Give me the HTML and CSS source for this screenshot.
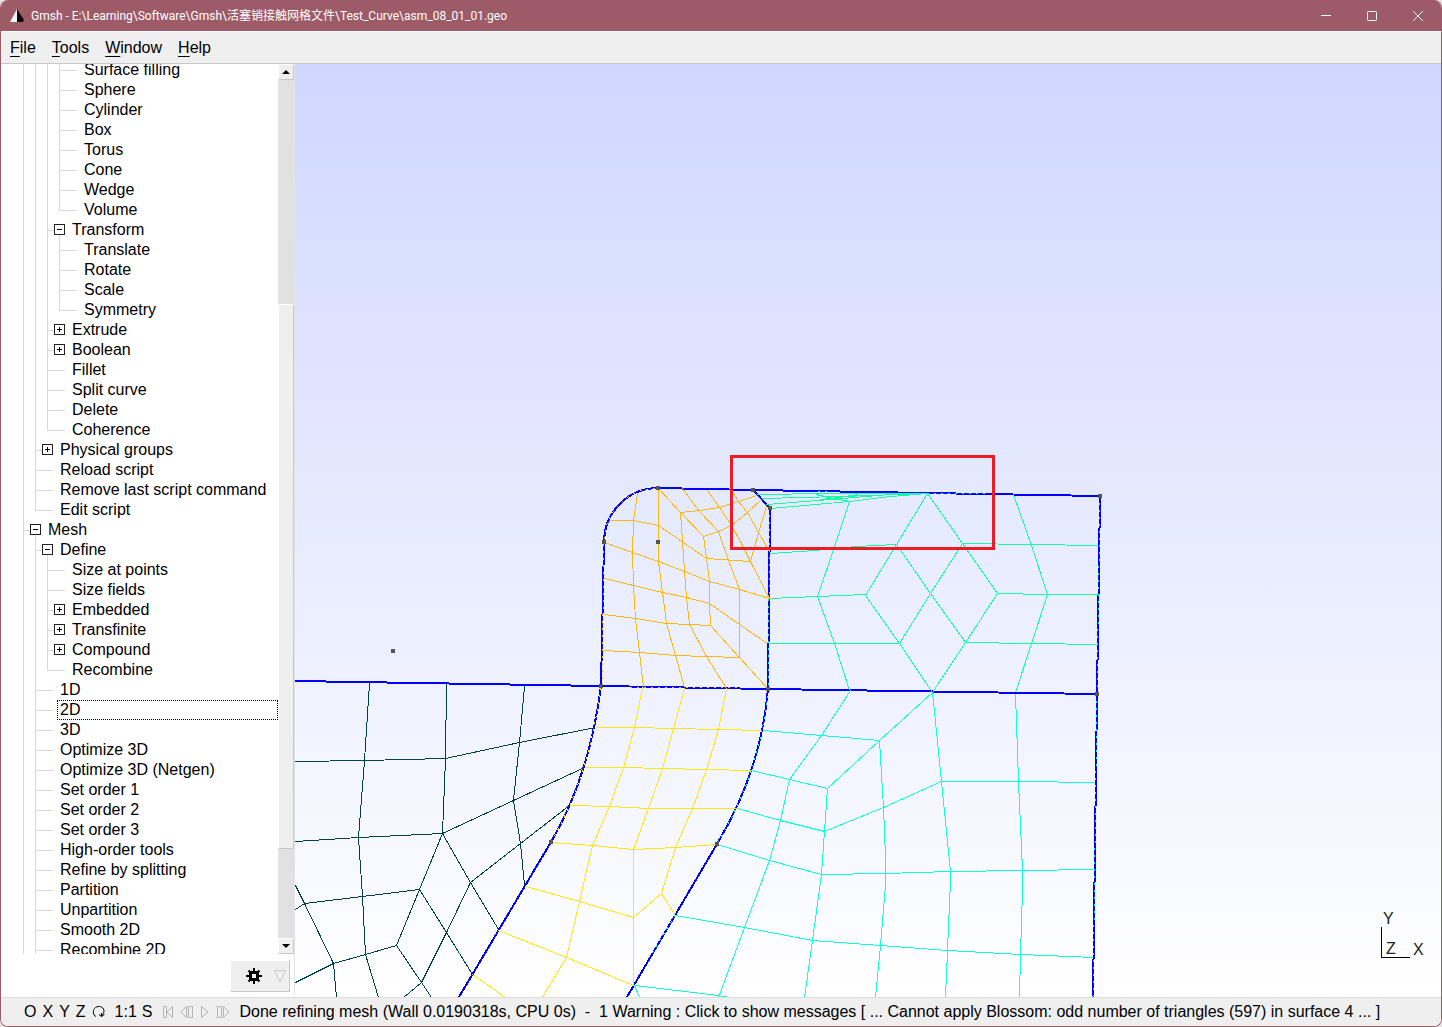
FILE: index.html
```html
<!DOCTYPE html>
<html lang="en">
<head>
<meta charset="utf-8">
<title>Gmsh</title>
<link rel="stylesheet" href="styles.css">
</head>
<body>
<div class="window">
  <header class="titlebar">
    <svg class="logo" width="16" height="16" viewBox="0 0 16 16" aria-hidden="true"><path d="M8 1L1 14H8Z" fill="#f4f4f4"/><path d="M8 1L15 12L14 14H8Z" fill="#0a0a0a"/></svg>
    <h1 class="title">Gmsh - E:\Learning\Software\Gmsh\活塞销接触网格文件\Test_Curve\asm_08_01_01.geo</h1>
    <div class="controls">
      <button class="control" aria-label="Minimize"><svg width="12" height="12" viewBox="0 0 12 12"><path d="M1 5.500H11" /></svg></button>
      <button class="control" aria-label="Maximize"><svg width="12" height="12" viewBox="0 0 12 12"><rect x="1.500" y="1.500" width="9" height="9" rx="1"/></svg></button>
      <button class="control" aria-label="Close"><svg width="12" height="12" viewBox="0 0 12 12"><path d="M1 1L11 11M11 1L1 11"/></svg></button>
    </div>
  </header>
  <nav class="menubar">
    <button class="menu"><u>F</u>ile</button>
    <button class="menu"><u>T</u>ools</button>
    <button class="menu"><u>W</u>indow</button>
    <button class="menu"><u>H</u>elp</button>
  </nav>
  <main class="main">
    <aside class="side">
      <div class="panel">
        <div class="viewport">
          <ul class="tree">
            <li><ul>
              <li><ul>
                <li><ul>
                  <li><div class="row">Surface filling</div></li>
                  <li><div class="row">Sphere</div></li>
                  <li><div class="row">Cylinder</div></li>
                  <li><div class="row">Box</div></li>
                  <li><div class="row">Torus</div></li>
                  <li><div class="row">Cone</div></li>
                  <li><div class="row">Wedge</div></li>
                  <li><div class="row">Volume</div></li>
                </ul></li>
                <li><div class="row open"><button class="box minus" aria-label="Collapse Transform"></button>Transform</div><ul>
                  <li><div class="row">Translate</div></li>
                  <li><div class="row">Rotate</div></li>
                  <li><div class="row">Scale</div></li>
                  <li><div class="row">Symmetry</div></li>
                </ul></li>
                <li><div class="row node"><button class="box plus" aria-label="Expand Extrude"></button>Extrude</div></li>
                <li><div class="row node"><button class="box plus" aria-label="Expand Boolean"></button>Boolean</div></li>
                <li><div class="row">Fillet</div></li>
                <li><div class="row">Split curve</div></li>
                <li><div class="row">Delete</div></li>
                <li><div class="row">Coherence</div></li>
              </ul></li>
              <li><div class="row node"><button class="box plus" aria-label="Expand Physical groups"></button>Physical groups</div></li>
              <li><div class="row">Reload script</div></li>
              <li><div class="row">Remove last script command</div></li>
              <li><div class="row">Edit script</div></li>
            </ul></li>
            <li class="more"><div class="row open"><button class="box minus" aria-label="Collapse Mesh"></button>Mesh</div><ul>
              <li><div class="row open"><button class="box minus" aria-label="Collapse Define"></button>Define</div><ul>
                <li><div class="row">Size at points</div></li>
                <li><div class="row">Size fields</div></li>
                <li><div class="row node"><button class="box plus" aria-label="Expand Embedded"></button>Embedded</div></li>
                <li><div class="row node"><button class="box plus" aria-label="Expand Transfinite"></button>Transfinite</div></li>
                <li><div class="row node"><button class="box plus" aria-label="Expand Compound"></button>Compound</div></li>
                <li><div class="row">Recombine</div></li>
              </ul></li>
              <li><div class="row">1D</div></li>
              <li><div class="row focused"><span class="focus">2D</span></div></li>
              <li><div class="row">3D</div></li>
              <li><div class="row">Optimize 3D</div></li>
              <li><div class="row">Optimize 3D (Netgen)</div></li>
              <li><div class="row">Set order 1</div></li>
              <li><div class="row">Set order 2</div></li>
              <li><div class="row">Set order 3</div></li>
              <li><div class="row">High-order tools</div></li>
              <li><div class="row">Refine by splitting</div></li>
              <li><div class="row">Partition</div></li>
              <li><div class="row">Unpartition</div></li>
              <li><div class="row">Smooth 2D</div></li>
              <li class="more"><div class="row">Recombine 2D</div></li>
            </ul></li>
          </ul>
        </div>
        <div class="scrollbar">
          <button class="arrow" aria-label="Scroll up"><svg width="8" height="4" viewBox="0 0 8 4"><path d="M4 0L8 4H0Z"/></svg></button>
          <div class="before"></div>
          <div class="thumb"></div>
          <div class="after"></div>
          <button class="arrow" aria-label="Scroll down"><svg width="8" height="4" viewBox="0 0 8 4"><path d="M0 0H8L4 4Z"/></svg></button>
        </div>
      </div>
      <div class="tools">
        <button class="gear" aria-label="Options">
          <svg width="16" height="16" viewBox="0 0 16 16"><path d="M8 0V16M0 8H16M2.500 2.500L13.500 13.500M13.500 2.500L2.500 13.500" stroke="#000" stroke-width="2"/><rect x="4.500" y="4.500" width="7" height="7" rx="1" fill="#efefef" stroke="#000" stroke-width="3"/></svg>
          <svg width="12" height="12" viewBox="0 0 12 12"><path d="M.5.5H11.500L6 11.500Z" fill="none" stroke="#ccc"/></svg>
        </button>
      </div>
    </aside>
    <section class="canvas">
      <svg class="mesh" viewBox="295 64 1146 933" preserveAspectRatio="xMinYMin slice" role="img" aria-label="Mesh view">
        <g class="edge">
          <path d="M295 681L601 686L768 689L1097 694"/>
          <path d="M459 997L551 842Q589 778 601 686L604 542A54 54 0 0 1 658 488L753 490L1100 496L1097 694L1093 997"/>
          <path d="M753 490L770 508L768 689Q761 771 717 844L627 997"/>
        </g>
        <g transform="translate(.5 .5)">
          <g class="line teal">
            <path d="M369 683L364 760L358 837L362 896L365 954L378 997"/>
            <path d="M446 684L445 758L442 833L419 889L396 945L421 982L431 997"/>
            <path d="M524 686L519 742L513 800L520 843L524 885"/>
            <path d="M295 761L364 760L445 758L519 742L595 727"/>
            <path d="M295 841L358 837L442 833L513 800L584 767"/>
            <path d="M442 833L470 882L498 929"/>
            <path d="M569 805L520 843L470 882L446 932L421 982L403 997"/>
            <path d="M295 909L304 903L362 896L419 889L446 932L472 974"/>
            <path d="M295 885L304 903L333 963L336 997"/>
            <path d="M295 982L333 963L365 954L396 945"/>
          </g>
          <g class="line orange">
            <path d="M610 520L633 520L658 525L706 558L750 561L769 598"/>
            <path d="M604 542L632 552L658 561L684 571L709 581L739 589L769 598"/>
            <path d="M604 578L633 585L662 592L686 597L709 603L739 624L767 643"/>
            <path d="M604 614L635 618L666 623L689 624L710 625L739 657L768 689"/>
            <path d="M603 650L639 652L675 655L706 656L739 657"/>
            <path d="M637 493L633 520L632 552L633 585L635 618L639 652L643 687"/>
            <path d="M658 488V561L662 592L666 623L675 655L684 687"/>
            <path d="M658 488L680 512L703 536L718 531L731 525L747 512L761 499"/>
            <path d="M680 512L682 541L684 571L686 597L689 624L706 656L726 688"/>
            <path d="M682 488L699 511L718 531L728 560L739 589V657"/>
            <path d="M703 536L706 558L709 581V603L710 625"/>
            <path d="M680 512L699 510L719 507L738 501L756 495"/>
            <path d="M707 490L719 507L731 525L741 543L750 561"/>
            <path d="M732 491L738 501L747 512L758 532L769 551"/>
            <path d="M766 506L758 532L750 561"/>
          </g>
          <g class="line green">
            <path d="M770 553L814 550L856 546L896 544"/>
            <path d="M962 543L1031 544L1098 545"/>
            <path d="M769 598L817 596L865 594"/>
            <path d="M997 593L1047 594L1099 594"/>
            <path d="M769 643H899"/>
            <path d="M965 642L1031 643L1098 644"/>
            <path d="M849 501L833 549L817 596L834 643L849 690"/>
            <path d="M927 493L896 544L865 595L899 643L932 692"/>
            <path d="M896 544L930 593L965 642"/>
            <path d="M927 493L962 543L997 593L965 642L932 692"/>
            <path d="M962 543L930 593L899 643"/>
            <path d="M1013 494L1031 545L1047 594L1031 643L1015 692"/>
            <path d="M757 494L826 493L927 493M762 498L840 496L927 493M766 504L830 499L890 494L927 493M770 508L849 501L890 496L927 493"/>
            <path d="M816 494L832 498L849 501M820 499L838 497L858 494"/>
          </g>
          <g class="line cyan">
            <path d="M850 690L821 735L789 779L780 820L769 860L744 927L718 997"/>
            <path d="M763 730L821 735L879 740"/>
            <path d="M751 770L789 779L827 788"/>
            <path d="M932 692L879 740L827 788L824 831L821 874L812 940L804 997"/>
            <path d="M737 808L780 820L824 831L883 807L941 781H1018L1095 782"/>
            <path d="M717 844L769 860L821 874L885 873L950 871L1022 870L1094 869"/>
            <path d="M879 740L883 807L885 857V885L880 945L875 997"/>
            <path d="M932 692L941 781L950 871V880L947 950L945 997"/>
            <path d="M1015 694L1018 781L1022 870V890L1020 954L1019 997"/>
            <path d="M675 915L744 927L812 940L880 945L947 950L1020 954L1093 957"/>
            <path d="M634 985L718 995L729 997M634 985L639 997"/>
          </g>
          <g class="line yellow">
            <path d="M596 727L634 727L673 728L718 729L762 730"/>
            <path d="M585 767L623 767L662 768L706 769L751 770"/>
            <path d="M570 805L609 806L648 808H692L736 808"/>
            <path d="M551 842L592 845L633 849L675 847L717 844"/>
            <path d="M525 886L579 901L633 917L661 893L675 915"/>
            <path d="M498 930L566 957L633 985"/>
            <path d="M472 974L505 997"/>
            <path d="M542 997L566 957L579 901L592 845L609 806L623 767L634 727L642 687"/>
            <path d="M633 985V849L648 808L662 768L673 728L684 688"/>
            <path d="M661 893L675 847L692 808L706 769L718 729L726 688"/>
          </g>
        </g>
        <g class="line stipple">
          <path class="yellow" d="M551 842Q589 778 601 686"/>
          <path class="cyan" d="M768 689Q761 771 717 844M675 915L650 957M1097 694L1093 997"/>
          <path class="green" d="M770 508L768 689M1100 496L1097 694M927 493L990 494M818 491H832"/>
          <path class="orange" d="M602 686L604 542A54 54 0 0 1 658 488M630 687H740"/>
        </g>
        <path class="points" d="M656 486h4v4h-4zM751 488h4v4h-4zM768 506h4v4h-4zM602 540h4v4h-4zM656 540h4v4h-4zM599 684h4v4h-4zM766 687h4v4h-4zM1098 494h4v4h-4zM1095 692h4v4h-4zM549 840h4v4h-4zM715 842h4v4h-4zM391 649h4v4h-4z"/>
        <rect class="highlight" x="731.500" y="456.500" width="262" height="92"/>
        <path class="axis" d="M1381.500 927V957.500H1410"/>
        <g class="axis-name"><text x="1383" y="924">Y</text><text x="1386" y="954">Z</text><text x="1413" y="955">X</text></g>
      </svg>
    </section>
  </main>
  <footer class="status">
    <div class="views">
      <button class="key">O</button><button class="key">X</button><button class="key">Y</button><button class="key">Z</button>
      <button class="key" aria-label="Rotate"><svg width="14" height="14" viewBox="0 0 14 14"><path d="M4 11.500C1 10 .5 6 2.500 3.500C5 .5 10 1 11.500 4C12.500 6 12 8 10 10.500M7 9.500L9.500 11.500L12.500 9.500M9.500 11.500V8" fill="none" stroke="#000"/></svg></button>
      <button class="key ratio">1:1</button><button class="key">S</button>
    </div>
    <div class="player">
      <button class="key" aria-label="First"><svg width="12" height="14" viewBox="0 0 12 14"><path d="M1.500 1.500H4.500V12.500H1.500ZM10.500 1.500V12.500L5 7Z"/></svg></button>
      <button class="key" aria-label="Previous"><svg width="14" height="14" viewBox="0 0 14 14"><path d="M6.500 1.500V12.500L1 7ZM8.500 1.500H12.500V12.500H8.500Z"/></svg></button>
      <button class="key" aria-label="Play"><svg width="10" height="14" viewBox="0 0 10 14"><path d="M1.500 1.500V12.500L8 7Z"/></svg></button>
      <button class="key" aria-label="Next"><svg width="14" height="14" viewBox="0 0 14 14"><path d="M1.500 1.500H5.500V12.500H1.500ZM7.500 1.500V12.500L13 7Z"/></svg></button>
    </div>
    <button class="message">Done refining mesh (Wall 0.0190318s, CPU 0s)  -  1 Warning : Click to show messages [ ... Cannot apply Blossom: odd number of triangles (597) in surface 4 ... ]</button>
  </footer>
</div>
</body>
</html>
```
FILE: styles.css
```css
* { box-sizing: border-box; }

body {
  margin: 0;
  background: #e4e0e2;
  color: #000;
  font: 16px/20px "Liberation Sans", Arial, "Noto Sans CJK SC", sans-serif;
}

button {
  margin: 0;
  padding: 0;
  border: 0;
  background: none;
  color: inherit;
  font: inherit;
}

svg { display: block; }

ul { margin: 0; padding: 0; list-style: none; }

.window {
  display: flex;
  flex-direction: column;
  height: 100vh;
  border: 1px solid #9d5b68;
  border-top: 0;
  border-radius: 8px;
  overflow: hidden;
  background: #fff;
}

/* Title bar */
.titlebar {
  display: flex;
  flex: none;
  align-items: center;
  height: 31px;
  padding-left: 8px;
  background: #9d5b68;
  color: #fff;
}
.logo { margin-right: 6px; }
.title {
  flex: 1;
  margin: 0;
  font: 12px/16px Roboto, "Noto Sans CJK SC", sans-serif;
  white-space: nowrap;
}
.controls { display: flex; }
.control {
  display: grid;
  place-items: center;
  width: 46px;
  height: 30px;
}
.control svg { fill: none; stroke: #fff; }

/* Menu bar */
.menubar {
  display: flex;
  flex: none;
  gap: 16px;
  height: 33px;
  padding: 0 9px;
  border-top: 1px solid #fff;
  border-bottom: 1px solid #c8c8c8;
  background: #efefef;
}
.menu u { text-underline-offset: 3px; }

/* Side panel */
.main { display: flex; flex: 1; min-height: 0; }
.side {
  display: flex;
  flex: none;
  flex-direction: column;
  width: 294px;
  border-right: 1px solid #e4e4e4;
}
.panel { display: flex; flex: 1; min-height: 0; }
.viewport { flex: 1; overflow: hidden; }
.tree { margin: -4px 0 0 22px; }
.tree ul { margin-left: 12px; }
.tree li { background: linear-gradient(#d9d9d9, #d9d9d9) 0 0 / 1px 100% no-repeat; }
.tree li:last-child:not(.more) { background-size: 1px 11px; }
.row {
  display: flex;
  align-items: center;
  height: 20px;
  padding-left: 25px;
  background: linear-gradient(#d9d9d9, #d9d9d9) 0 10px / 18px 1px no-repeat;
  white-space: nowrap;
}
.node, .open { padding-left: 7px; background-size: 7px 1px; }
.open {
  background:
    linear-gradient(#d9d9d9, #d9d9d9) 0 10px / 7px 1px no-repeat,
    linear-gradient(#d9d9d9, #d9d9d9) 12px 15px / 1px 5px no-repeat;
}
.box {
  width: 11px;
  height: 11px;
  margin: 0 7px 1px 0;
  border: 1px solid #222;
}
.minus { background: linear-gradient(#000, #000) center / 5px 1px no-repeat #fff; }
.plus {
  background:
    linear-gradient(#000, #000) center / 5px 1px no-repeat,
    linear-gradient(#000, #000) center / 1px 5px no-repeat #fff;
}
.focused { padding-left: 22px; }
.focus {
  flex: 1;
  height: 20px;
  padding-left: 2px;
  border: 1px dotted #000;
  line-height: 18px;
}

/* Scroll bar */
.scrollbar {
  display: flex;
  flex: none;
  flex-direction: column;
  width: 16px;
  background: #e1e1e1;
}
.arrow, .thumb {
  border: 1px solid #c8c8c8;
  border-top-color: #fff;
  border-left-color: #fff;
  background: #efefef;
}
.arrow { display: grid; flex: none; place-items: center; height: 16px; }
.before { flex: 225; }
.thumb { flex: 544; }
.after { flex: 89; }

.tools {
  display: flex;
  flex: none;
  justify-content: flex-end;
  padding: 6px 4px 5px 0;
}
.gear {
  display: flex;
  align-items: center;
  justify-content: flex-end;
  gap: 12px;
  width: 60px;
  height: 32px;
  padding-right: 3px;
  border: 1px solid #c8c8c8;
  border-top-color: #fff;
  border-left-color: #fff;
  background: #efefef;
}

/* Graphic window */
.canvas {
  flex: 1;
  min-width: 0;
  overflow: hidden;
  background: linear-gradient(#cfd7ff, #fff);
}
.mesh {
  width: 100%;
  height: 100%;
  shape-rendering: crispEdges;
}
.edge { fill: none; stroke: #00f; stroke-width: 2; }
.line { fill: none; stroke-width: 1; }
.teal { stroke: #004048; }
.orange { stroke: #ffb80f; }
.green { stroke: #14ffa2; }
.cyan { stroke: #0fffdf; }
.yellow { stroke: #ffe614; }
.stipple { stroke-dasharray: 2 5; }
.points { fill: #555; }
.highlight { fill: none; stroke: #ed1c24; stroke-width: 3; }
.axis { fill: none; stroke: #000; }
.axis-name { fill: #222; }

/* Status bar */
.status {
  display: flex;
  flex: none;
  align-items: center;
  height: 29px;
  padding-left: 23px;
  border-top: 1px solid #dcdcdc;
  background: #efefef;
}
.views, .player { display: flex; align-items: center; }
.views { gap: 6px; }
.ratio { margin: 0 -1px 0 3px; }
.player { gap: 6px; margin: 0 10px 0 9px; }
.player svg { fill: none; stroke: #b4b4b4; }
.message { white-space: pre; }
```
